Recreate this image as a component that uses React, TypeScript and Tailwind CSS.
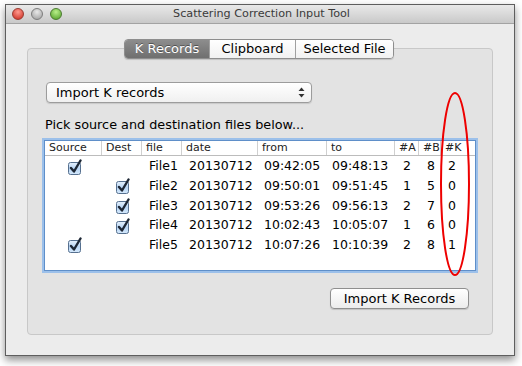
const rows = [
  { src: true, dest: false, file: 'File1', date: '20130712', from: '09:42:05', to: '09:48:13', a: 2, b: 8, k: 2 },
  { src: false, dest: true, file: 'File2', date: '20130712', from: '09:50:01', to: '09:51:45', a: 1, b: 5, k: 0 },
  { src: false, dest: true, file: 'File3', date: '20130712', from: '09:53:26', to: '09:56:13', a: 2, b: 7, k: 0 },
  { src: false, dest: true, file: 'File4', date: '20130712', from: '10:02:43', to: '10:05:07', a: 1, b: 6, k: 0 },
  { src: true, dest: false, file: 'File5', date: '20130712', from: '10:07:26', to: '10:10:39', a: 2, b: 8, k: 1 },
];

const cols = [
  { label: 'Source', w: 'w-[57px]' },
  { label: 'Dest', w: 'w-[40px]' },
  { label: 'file', w: 'w-[40px]' },
  { label: 'date', w: 'w-[76px]' },
  { label: 'from', w: 'w-[69px]' },
  { label: 'to', w: 'w-[68px]' },
  { label: '#A', w: 'w-[24px]' },
  { label: '#B', w: 'w-[22px]' },
  { label: '#K', w: 'w-[30px]' },
];

function Check() {
  return (
    <svg width="16" height="16" viewBox="0 0 16 16" className="block">
      <defs>
        <linearGradient id="cbg" x1="0" y1="0" x2="0" y2="1">
          <stop offset="0" stopColor="#e6f1fc" />
          <stop offset="0.5" stopColor="#b9d6f5" />
          <stop offset="1" stopColor="#d4e8fb" />
        </linearGradient>
      </defs>
      <rect x="1.5" y="3.5" width="12" height="12" rx="2" fill="url(#cbg)" stroke="#56708f" />
      <path d="M4 9 L7 12.5 L13.5 1.5" fill="none" stroke="#1d2735" strokeWidth="2.4" strokeLinecap="round" strokeLinejoin="round" />
    </svg>
  );
}

function Light({ from, to, ring }: { from: string; to: string; ring: string }) {
  return (
    <span
      className="block h-[12px] w-[12px] rounded-full border"
      style={{ background: `radial-gradient(circle at 50% 30%, ${from}, ${to})`, borderColor: ring }}
    />
  );
}

export default function App() {
  return (
    <div className="relative h-[366px] w-[522px] bg-white font-['DejaVu_Sans',sans-serif] text-black">
      <div className="ml-[5px] pt-[4px]">
        <div className="flex h-[352px] w-[510px] flex-col border border-[#5e5e5e] bg-[#ececec] shadow-[0_4px_8px_rgba(0,0,0,0.45)]">
          {/* title bar */}
          <div className="relative flex h-[19px] items-center justify-center border-b border-[#a3a3a3] bg-gradient-to-b from-[#e9e9e9] to-[#c9c9c9]">
            <div className="absolute left-[6px] top-[3px] flex gap-[7px]">
              <Light from="#ff9a8f" to="#c9281b" ring="#9b3a30" />
              <Light from="#e8e8e8" to="#9b9b9b" ring="#7d7d7d" />
              <Light from="#b9ef8a" to="#4e9d24" ring="#4b7a30" />
            </div>
            <span className="pl-[3px] text-[11.2px] text-[#3a3a3a]">Scattering Correction Input Tool</span>
          </div>

          {/* content */}
          <div className="flex flex-col px-[21px] pt-[15px]">
            <div className="z-10 flex justify-center pr-[2px]">
              <div className="flex h-[20px] overflow-hidden rounded-[4px] border border-[#8e8e8e] text-[13px] shadow-[0_1px_1px_rgba(0,0,0,0.15)]">
                <div className="flex w-[84px] items-center justify-center bg-gradient-to-b from-[#8d8d8d] to-[#6f6f6f] text-white [text-shadow:0_-1px_0_rgba(0,0,0,0.4)]">
                  K Records
                </div>
                <div className="flex w-[86px] items-center justify-center border-l border-[#a0a0a0] bg-gradient-to-b from-white to-[#f1f1f1]">
                  Clipboard
                </div>
                <div className="flex w-[98px] items-center justify-center border-l border-[#a0a0a0] bg-gradient-to-b from-white to-[#f1f1f1]">
                  Selected File
                </div>
              </div>
            </div>

            <div className="-mt-[11px] flex h-[287px] flex-col rounded-[4px] border border-[#c8c8c8] bg-[#e3e3e3] pl-[16px] pr-[17px] pt-[33px]">
              {/* popup */}
              <div className="ml-[2px] flex h-[21px] w-[266px] items-center justify-between rounded-[4px] border border-[#9c9c9c] bg-gradient-to-b from-white to-[#f0f0f0] pl-[9px] pr-[6px] text-[13px] shadow-[0_1px_1px_rgba(0,0,0,0.12)]">
                <span>Import K records</span>
                <svg width="7" height="11" viewBox="0 0 7 11">
                  <path d="M0.5 4 L3.5 0.5 L6.5 4 Z" fill="#333" />
                  <path d="M0.5 7 L3.5 10.5 L6.5 7 Z" fill="#333" />
                </svg>
              </div>

              <div className="mt-[14px] ml-[1px] text-[12.8px] leading-[16px]">Pick source and destination files below...</div>

              {/* table */}
              <div className="mt-[7px] h-[131px] w-[432px] border border-[#5f8fc9] bg-white shadow-[0_0_0_2px_#9cc0ea]">
                <div className="flex h-[15px] border-b border-[#bcbcbc] text-[11px] leading-[14px] text-[#222]">
                  {cols.map((c, i) => (
                    <div key={c.label} className={`${c.w} shrink-0 pl-[4px] ${i < cols.length - 1 ? 'border-r border-[#d0d0d0]' : ''}`}>
                      {c.label}
                    </div>
                  ))}
                </div>
                <div className="pt-[1px] text-[12.5px]">
                  {rows.map((r) => (
                    <div key={r.file} className="flex h-[19.6px] items-center">
                      <div className="flex w-[57px] shrink-0 justify-center pl-[2px]">{r.src && <Check />}</div>
                      <div className="flex w-[40px] shrink-0 justify-center pl-[1px]">{r.dest && <Check />}</div>
                      <div className="w-[40px] shrink-0 pl-[7px]">{r.file}</div>
                      <div className="w-[76px] shrink-0 pl-[7px]">{r.date}</div>
                      <div className="w-[69px] shrink-0 pl-[6px]">{r.from}</div>
                      <div className="w-[68px] shrink-0 pl-[5px]">{r.to}</div>
                      <div className="w-[24px] shrink-0 pl-[8px]">{r.a}</div>
                      <div className="w-[22px] shrink-0 pl-[8px]">{r.b}</div>
                      <div className="w-[30px] shrink-0 pl-[7px]">{r.k}</div>
                    </div>
                  ))}
                </div>
              </div>

              <div className="mt-[17px] flex justify-end pr-[6px]">
                <div className="flex h-[21px] w-[139px] items-center justify-center rounded-[4px] border border-[#8f8f8f] bg-gradient-to-b from-white to-[#ececec] text-[13px] shadow-[0_1px_1px_rgba(0,0,0,0.15)]">
                  Import K Records
                </div>
              </div>
            </div>
          </div>
        </div>
      </div>

      {/* red annotation ellipse */}
      <svg className="pointer-events-none absolute left-0 top-0" width="522" height="366">
        <ellipse cx="455" cy="184" rx="14" ry="91" fill="none" stroke="#ee0000" strokeWidth="2" />
      </svg>
    </div>
  );
}
